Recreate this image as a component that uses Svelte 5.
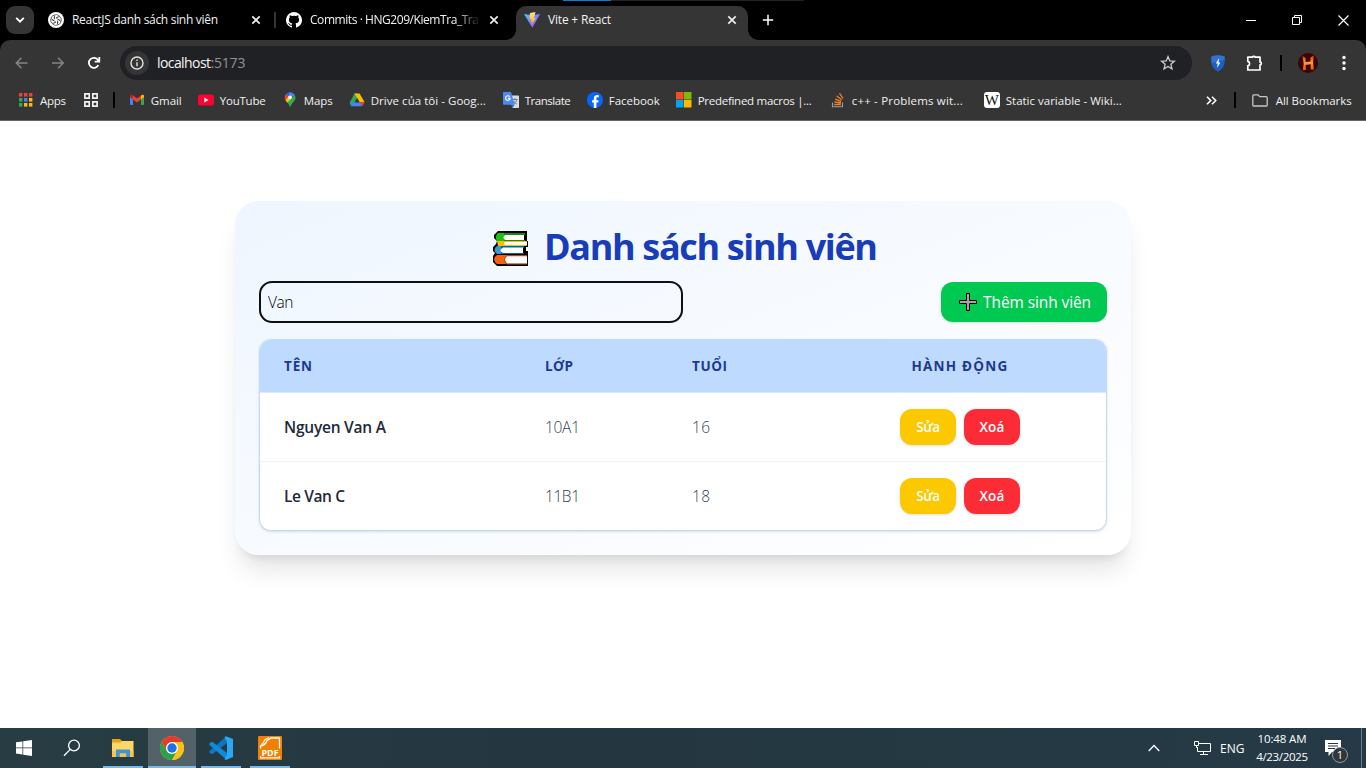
<script>
  // Tracks a label out (or in) so that it fills the given width.
  function fit(node, width) {
    const natural = node.getBoundingClientRect().width;
    const gaps = Math.max(1, [...node.textContent].length - 1);
    node.style.letterSpacing = `${(width - natural) / gaps}px`;
  }

  const bookmarks = [
    { icon: 'gmail', x: 129, text: 'Gmail', w: 31 },
    { icon: 'youtube', x: 198, text: 'YouTube', w: 46 },
    { icon: 'maps', x: 282, text: 'Maps', w: 29 },
    { icon: 'drive', x: 349, text: 'Drive của tôi - Goog...', w: 115 },
    { icon: 'translate', x: 503, text: 'Translate', w: 46 },
    { icon: 'facebook', x: 587, text: 'Facebook', w: 51 },
    { icon: 'microsoft', x: 676, text: 'Predefined macros |...', w: 114 },
    { icon: 'stack', x: 830, text: 'c++ - Problems wit...', w: 111 },
    { icon: 'wiki', x: 984, text: 'Static variable - Wiki...', w: 116 }
  ];

  const query = 'Van';
  const students = [
    { name: 'Nguyen Van A', nameW: 102, group: '10A1', age: 16 },
    { name: 'Le Van C', nameW: 61, group: '11B1', age: 18 }
  ];
</script>

{#snippet cross()}
  <svg class="cross" width="10" height="10" viewBox="0 0 10 10"><path d="M1.3 1.3l7.4 7.4M8.7 1.3L1.3 8.7" stroke="#eee" stroke-width="1.7" /></svg>
{/snippet}

{#snippet mark(name)}
  {#if name === 'gmail'}
    <svg width="16" height="16" viewBox="0 0 16 16"><path fill="#4285f4" d="M1 4.5l3 2.3V13H2a1 1 0 0 1-1-1z" /><path fill="#34a853" d="M15 4.5l-3 2.3V13h2a1 1 0 0 0 1-1z" /><path fill="#fbbc04" d="M12 3.6l.9-.6C13.900 2.300 15 3 15 4v1.200l-3 2.300z" /><path fill="#c5221f" d="M4 3.600L3.100 3C2.100 2.300 1 3 1 4v1.200l3 2.300z" /><path fill="#ea4335" d="M4 3.600l4 3 4-3v3.900l-4 3-4-3z" /></svg>
  {:else if name === 'youtube'}
    <svg width="16" height="16" viewBox="0 0 16 16"><rect y="2.500" width="16" height="11" rx="2.600" fill="#ff0033" /><path fill="#fff" d="M6.300 5.600v4.800L10.600 8z" /></svg>
  {:else if name === 'maps'}
    <svg width="16" height="16" viewBox="0 0 16 16"><path fill="#34a853" d="M8 15.500C7.300 13.500 6.700 12 5.200 10.300L12.800 3.100c1.200 2.100.7 4.300-.6 6C10.100 11.600 8.900 13 8 15.500z" /><path fill="#4285f4" d="M6.400.5C9 -.3 11.700.9 12.800 3.100L8 7z" /><path fill="#1a73e8" d="M6.400.5L8 7 3.800 2.300C4.500 1.400 5.300.8 6.400.5z" /><path fill="#ea4335" d="M3.800 2.200L7 4.900 3.400 8.100C2.200 6 2.600 3.600 3.800 2.200z" /><path fill="#fbbc04" d="M3.300 8L7 4.200l2.500 2.500-4.300 4z" /><circle cx="8" cy="5.300" r="1.900" fill="#fff" /></svg>
  {:else if name === 'drive'}
    <svg width="16" height="16" viewBox="0 0 16 16"><path fill="#34a853" d="M5.400 1.500H8L9.700 4.400 4 14.200H2.600L.8 10.600z" /><path fill="#fbbc04" d="M5.400 1.500h5.200l5 8.800h-5z" /><path fill="#4285f4" d="M4.800 10.200h6.700l1.300 4H2.600L.7 10.900z" /><path fill="#ea4335" d="M10.600 10.200h5l-2.200 4z" /><path fill="#353535" d="M8 6l2.400 4.200H5.600z" /></svg>
  {:else if name === 'translate'}
    <svg width="16" height="16" viewBox="0 0 16 16"><path fill="#d9dce0" d="M6 3.500h9.200a.8.8 0 0 1 .8.800v11a.7.7 0 0 1-.8.700H9.500z" /><path d="M9 7.500h5.500M12 6v1.500M13.800 7.500c-.4 2-1.800 3.600-3.400 4.500M10.300 8.500c.8 1.700 2 2.900 3.600 3.700" stroke="#6f7b85" fill="none" /><path fill="#4a8af4" d="M.8 0H8l3.700 12.700H.8A.8.8 0 0 1 0 12V.8A.8.8 0 0 1 .8 0z" /><path fill="#2866c8" d="M8 12.700h3.700L9.300 16z" /><path d="M6.800 4.700A2.300 2.300 0 1 0 7.200 6.400H4.900" stroke="#fff" stroke-width="1.100" fill="none" /></svg>
  {:else if name === 'facebook'}
    <svg width="16" height="16" viewBox="0 0 16 16"><circle cx="8" cy="8" r="8" fill="#0866ff" /><path fill="#fff" d="M6.800 15.900v-5.300H5V8.200h1.800V6.900c0-2.600 1.200-3.800 3.600-3.800.5 0 1 .1 1.400.2v2.100c-1.800-.2-2.400.1-2.400 1.500v1.300h2.300l-.5 2.400H9.400v5.200c-.8.200-1.700.2-2.600.1z" /></svg>
  {:else if name === 'microsoft'}
    <svg width="16" height="16" viewBox="0 0 16 16"><path fill="#f25022" d="M0 0h7.500v7.500H0z" /><path fill="#7fba00" d="M8 0h7.500v7.500H8z" /><path fill="#00a4ef" d="M0 8h7.500v7.500H0z" /><path fill="#ffb900" d="M8 8h7.500v7.500H8z" /></svg>
  {:else if name === 'stack'}
    <svg width="16" height="16" viewBox="0 0 16 16" fill="none"><path d="M2.500 10.500v4.300h10v-4.300" stroke="#9aa0a6" stroke-width="1.100" /><path d="M4.200 12.500h6.600M4.400 9.900l6.500 1.100M5.200 7.100l6 2.600M6.800 4l5.100 4.100M9.500 1.300l3.600 5.200" stroke="#f48024" stroke-width="1.300" /></svg>
  {:else if name === 'wiki'}
    <span class="wiki">W</span>
  {/if}
{/snippet}

<div class="screen">
  <header class="chrome">
    <div class="top-edge"><i></i></div>
    <div class="tabs">
      <div class="tab-search">
        <svg width="10" height="8" viewBox="0 0 10 8"><path d="M1.200 1.800L5 5.600l3.800-3.800" stroke="#fff" stroke-width="1.900" fill="none" /></svg>
      </div>
      <div class="tab first">
        <svg width="16" height="16" viewBox="0 0 16 16"><circle cx="8" cy="8" r="8" fill="#fff" /><g fill="none" stroke="#333" stroke-width=".7">{#each [0, 60, 120, 180, 240, 300] as turn}<path transform="rotate({turn} 8 8)" d="M6.400 7.200V4.500A2 2 0 0 1 9.600 3l2.200 1.300M8 6.200l2.400-1.400" />{/each}</g></svg>
        <span class="title"><span use:fit={146}>ReactJS danh sách sinh viên</span></span>
        {@render cross()}
      </div>
      <i class="tab-rule"></i>
      <div class="tab second">
        <svg width="16" height="16" viewBox="0 0 16 16"><path fill="#fff" d="M8 0a8 8 0 0 0-2.500 15.600c.4.100.5-.2.500-.4v-1.500c-2.200.5-2.700-.9-2.700-.9-.4-.9-.9-1.200-.9-1.200-.7-.5.1-.5.100-.5.800.1 1.200.8 1.200.8.700 1.200 1.900.9 2.300.7.100-.5.300-.9.500-1.100-1.800-.2-3.600-.9-3.600-3.900 0-.9.300-1.600.8-2.200 0-.2-.3-1 .1-2.100 0 0 .7-.2 2.200.8a7.500 7.500 0 0 1 4 0c1.500-1 2.200-.8 2.200-.8.400 1.100.1 1.900.1 2.100.5.600.8 1.300.8 2.200 0 3.100-1.900 3.700-3.700 3.900.3.300.6.800.6 1.500v2.200c0 .2.100.5.500.4A8 8 0 0 0 8 0z" /></svg>
        <span class="title fade"><span use:fit={169}>Commits · HNG209/KiemTra_Tra</span></span>
        {@render cross()}
      </div>
      <div class="tab active">
        <svg width="16" height="16" viewBox="0 0 16 16"><defs><linearGradient id="va" x2="1" y2="1"><stop stop-color="#41d1ff" /><stop offset="1" stop-color="#bd34fe" /></linearGradient><linearGradient id="vb" x2="0" y2="1"><stop stop-color="#ffea83" /><stop offset="1" stop-color="#ffa800" /></linearGradient></defs><path fill="url(#va)" d="M0 2l8 1.300L16 2 8.400 15.700z" /><path fill="url(#vb)" d="M11.500 0L6 1.100 5.500 7.300l1.900-.3-.6 3 1.500-.5-.7 3.300L11.800 6l-1.900.3z" /></svg>
        <span class="title"><span use:fit={63}>Vite + React</span></span>
        {@render cross()}
      </div>
      <svg class="new-tab" width="12" height="12" viewBox="0 0 12 12"><path d="M6 .8v10.400M.8 6h10.400" stroke="#fff" stroke-width="1.500" /></svg>
      <div class="window-buttons">
        <svg width="11" height="11" viewBox="0 0 11 11"><path d="M0 5.500h10" stroke="#fff" /></svg>
        <svg width="11" height="11" viewBox="0 0 11 11" fill="none" stroke="#fff"><path d="M.5 2.500h7v7h-7zM2.500 2.500v-2h7v7h-2" /></svg>
        <svg width="11" height="11" viewBox="0 0 11 11"><path d="M.5.5l10 10M10.500.5l-10 10" stroke="#fff" stroke-width="1.200" /></svg>
      </div>
    </div>

    <div class="toolbar">
      <svg class="nav" width="14" height="12" viewBox="0 0 14 12" fill="none" stroke="#858585" stroke-width="1.500"><path d="M6.500.8L1.300 6l5.200 5.200M1.300 6H12.500" /></svg>
      <svg class="nav" width="14" height="12" viewBox="0 0 14 12" fill="none" stroke="#858585" stroke-width="1.500"><path d="M7 .8L12.200 6 7 11.200M12.200 6H1" /></svg>
      <svg class="reload" width="14" height="14" viewBox="0 0 14 14" fill="none" stroke="#fff" stroke-width="1.800"><path d="M11.300 9.200A5 5 0 1 1 11.100 4.200L12 5.600M12.300 1v4.700H7.700" /></svg>
      <div class="omnibox">
        <span class="info"><svg width="14" height="14" viewBox="0 0 14 14" fill="none" stroke="#e3e3e3" stroke-width="1.400"><circle cx="7" cy="7" r="6" /><path d="M7 6.200v4M7 3.600v1.500" /></svg></span>
        <span class="host" use:fit={54}>localhost</span><span class="port" use:fit={35}>:5173</span>
        <svg class="star" width="16" height="16" viewBox="0 0 16 16"><path d="M8 1.600l1.800 4.300 4.600.4-3.500 3 1.100 4.600L8 11.400l-4 2.500 1.100-4.600-3.500-3 4.600-.4z" fill="none" stroke="#ccc" stroke-width="1.300" /></svg>
      </div>
      <svg class="shield" width="14" height="17" viewBox="0 0 14 17"><path d="M.3 1.500Q7-.8 13.700 1.500V7c0 4.700-3.700 8-6.700 9.600C4 15 .3 11.700.3 7z" fill="#1f5ec4" /><path d="M.3 1.500Q7-.8 13.700 1.500V5L.3 8z" fill="#4386e5" opacity=".5" /><path d="M8.200 3L4.800 8.600h2L6 13 9.400 7.500H7.500z" fill="#fff" /></svg>
      <svg class="puzzle" width="18" height="18" viewBox="0 0 18 18"><path d="M1.800 3.200H6.500A1.500 1.300 0 0 1 9.300 3.200H14v4.700a1.300 1.500 0 0 1 0 3V16H1.800v-4.200a2.300 2.300 0 0 0 0-4.500z" fill="none" stroke="#fff" stroke-width="1.700" stroke-linejoin="round" /></svg>
      <i class="bar-rule tool-rule"></i>
      <svg class="avatar" width="20" height="20" viewBox="0 0 20 20"><defs><linearGradient id="fire" x2="0" y2="1"><stop stop-color="#d93a0b" /><stop offset=".5" stop-color="#ff9d35" /><stop offset="1" stop-color="#e34a0c" /></linearGradient></defs><circle cx="10" cy="10" r="10" fill="#3a0502" /><path d="M4.500 3L7.600 5v4l4.800-.6V4.500L15.700 2.500l-.6 7.500.8 6.800-3.300-.3.100-5.300-5.200.8.500 5-3.200.3.900-6.500z" fill="url(#fire)" /></svg>
      <svg class="more" width="4" height="16" viewBox="0 0 4 16" fill="#fff"><circle cx="2" cy="2.500" r="1.700" /><circle cx="2" cy="8" r="1.700" /><circle cx="2" cy="13.500" r="1.700" /></svg>
    </div>

    <div class="bookmarks">
      <svg class="apps" width="14" height="14" viewBox="0 0 14 14">{#each ['#ea4335', '#ea4335', '#ea4335', '#34a853', '#4285f4', '#fbbc04', '#34a853', '#fbbc04', '#fbbc04'] as color, i}<rect x={(i % 3) * 5} y={Math.floor(i / 3) * 5} width="3.400" height="3.600" fill={color} />{/each}</svg>
      <span use:fit={26}>Apps</span>
      <svg class="grid" width="14" height="14" viewBox="0 0 14 14" fill="none" stroke="#f1f1f1" stroke-width="1.700"><path d="M.9.9h4.300v4.300H.9zM8.800.9h4.300v4.300H8.800zM.9 8.800h4.300v4.300H.9zM8.800 8.800h4.300v4.300H8.800z" /></svg>
      <i class="bar-rule left-rule"></i>
      <div class="marks" style:grid-template-columns={bookmarks.map((b, i) => `${(bookmarks[i + 1]?.x ?? 1130) - b.x}px`).join(' ')}>
        {#each bookmarks as b}
          <div class="bookmark">{@render mark(b.icon)}<span use:fit={b.w}>{b.text}</span></div>
        {/each}
      </div>
      <svg class="overflow" width="11" height="9" viewBox="0 0 11 9" fill="none" stroke="#fff" stroke-width="1.600"><path d="M1 .8l3.700 3.700L1 8.200M6 .8l3.700 3.700L6 8.200" /></svg>
      <i class="bar-rule right-rule"></i>
      <svg class="folder" width="16" height="13" viewBox="0 0 16 13"><path d="M.8 11V1.800a1 1 0 0 1 1-1H6l1.800 1.900h6.400a1 1 0 0 1 1 1V11a1 1 0 0 1-1 1H1.800a1 1 0 0 1-1-1z" fill="none" stroke="#c7c7c7" stroke-width="1.300" /></svg>
      <span use:fit={76}>All Bookmarks</span>
    </div>
  </header>

  <main class="page">
    <section class="card">
      <h1>
        <svg width="38" height="36" viewBox="0 0 38 36">
          <path fill="#000" d="M6 0h29v10h1v6h-2v4h2v15H5l-4-4v-6l2-3-2-2v-4l3-3 1-3-3-3V4z" />
          <path fill="#16c60c" d="M6 2h8v8H5Q2 6 6 2z" /><path fill="#128b13" d="M12 2h21v2H14q-3 2.500 0 5h19v1H12z" /><path fill="#fff" d="M13 4h19v5H13q-3-2.500 0-5z" />
          <path fill="#ffb900" d="M5 10h30v1H13v3h22v1H6z" /><path fill="#fff" d="M13 11h22v3H13q-2-1.500 0-3z" />
          <path fill="#3a96dd" d="M5 15h6v8H5q-5-4 0-8z" /><path fill="#0063b1" d="M9 15h23v2H11q-4 2 0 5h21v1H9z" /><path fill="#fff" d="M11 16.500h20V22H11q-5-2.500 0-5.500z" />
          <path fill="#f7630c" d="M5 24h30v2H15q-4 3.500 0 7H5q-6-5 0-9z" /><path fill="#c3400b" d="M15 24h20v1.500H15q-4 4 0 7h20V33.500H15q-6-5 0-9.500z" /><path fill="#fff" d="M15 25.200h20v7.300H15q-4-3.700 0-7.300z" />
        </svg>
        <span use:fit={334}>Danh sách sinh viên</span>
      </h1>
      <div class="actions-bar">
        <input value={query} aria-label="Danh sách sinh viên" />
        <button class="add">
          <svg width="18" height="18" viewBox="0 0 18 18"><path d="M7.500.5h3v7h7v3h-7v7h-3v-7h-7v-3h7z" fill="#a5a5b0" stroke="#000" /></svg>
          <span use:fit={108}>Thêm sinh viên</span>
        </button>
      </div>
      <div class="table">
        <div class="row head">
          <div><span use:fit={28}>TÊN</span></div>
          <div><span use:fit={28}>LỚP</span></div>
          <div><span use:fit={35}>TUỔI</span></div>
          <div class="center"><span use:fit={96}>HÀNH ĐỘNG</span></div>
        </div>
        {#each students as s}
          <div class="row">
            <div class="name"><span use:fit={s.nameW}>{s.name}</span></div>
            <div><span use:fit={35}>{s.group}</span></div>
            <div><span use:fit={18}>{s.age}</span></div>
            <div class="center buttons">
              <button class="edit"><span use:fit={24}>Sửa</span></button>
              <button class="delete"><span use:fit={25}>Xoá</span></button>
            </div>
          </div>
        {/each}
      </div>
    </section>
  </main>

  <footer class="taskbar">
    <div class="task"><svg width="16" height="16" viewBox="0 0 16 16" fill="#fff"><path d="M0 2.300L6.500 1.400v6.100H0zM7.200 1.300L16 0v7.500H7.200zM0 8.300h6.500v6.200L0 13.600zM7.200 8.300H16V16l-8.800-1.300z" /></svg></div>
    <div class="task"><svg width="18" height="18" viewBox="0 0 18 18" fill="none" stroke="#fff" stroke-width="1.300"><circle cx="11" cy="6.500" r="5.400" /><path d="M7.200 10.400L1 16.700" /></svg></div>
    <div class="task open files"><svg width="22" height="20" viewBox="0 0 22 20"><path fill="#e5a50a" d="M0 1h8l2 2v4H0z" /><path fill="#ffd766" d="M0 4.500h8.500L10 3h11.500v16H0z" /><path fill="#f7c44b" d="M0 13h21.500v6H0z" /><path fill="#3f94d7" d="M4 19v-7.500h14V19h-3.800v-3.700H7.800V19z" /></svg></div>
    <div class="task open current"><svg width="24" height="24" viewBox="0 0 24 24"><circle cx="12" cy="12" r="12" fill="#fbc116" /><path fill="#e33b2e" d="M1.600 6A12 12 0 0 1 22.400 6H12L6.800 15z" /><path fill="#2ca14b" d="M1.600 6A12 12 0 0 0 12 24l5.200-9L12 17.500 6.800 15z" /><path fill="#fbc116" d="M12 6h10.400A12 12 0 0 1 12 24l5.200-9z" /><circle cx="12" cy="12" r="6" fill="#fff" /><circle cx="12" cy="12" r="4.700" fill="#1a73e8" /></svg></div>
    <div class="task open code"><svg width="24" height="24" viewBox="0 0 24 24"><path fill="#0b77c2" d="M17 .8L18 7 4 17.800 2 18 .4 16.600v-1.500z" /><path fill="#108bd8" d="M.4 7.500L2 6l2 .2L18 17l-1 6.200L.4 9z" /><path fill="#2aa8f2" d="M17 .3L24 3v18l-7 3-1.500-.8L18 18V6l-2.500-5z" /></svg></div>
    <div class="task open pdf"><svg width="24" height="24" viewBox="0 0 24 24"><rect width="24" height="24" rx="1" fill="#f08000" /><path d="M2.500 12.500V10q5-1 6-4.500V5L13 2h8.500v10.500M2.500 20v1.800h19V20" fill="none" stroke="#fff" stroke-width="1.300" /><path d="M3 8.500Q6 7.500 6.500 4L11 1.500" fill="none" stroke="#fff" stroke-width="1.100" /><text x="3.500" y="20" fill="#fff" font-size="8" font-weight="700" textLength="17" lengthAdjust="spacingAndGlyphs">PDF</text></svg></div>
    <div class="tray">
      <svg class="chevron" width="12" height="8" viewBox="0 0 12 8"><path d="M.7 7L6 1.500 11.300 7" stroke="#fff" stroke-width="1.300" fill="none" /></svg>
      <svg class="network" width="17" height="15" viewBox="0 0 17 15" fill="none" stroke="#fff"><path d="M5 2.500h11.500v8H3.500V6M9.500 10.500v3M6 13.500h8M.5.5h4v4h-4zM2.500 4.500v2h1" /></svg>
      <span class="lang" use:fit={23}>ENG</span>
      <div class="clock"><span use:fit={49}>10:48 AM</span><span use:fit={52}>4/23/2025</span></div>
      <div class="notice"><svg width="17" height="17" viewBox="0 0 17 17"><path fill="#fff" d="M0 0h16v12H7l-3.500 4V12H0z" /><path d="M3 3.500h10M3 6h10M3 8.500h7" stroke="#263943" /></svg><b>1</b></div>
      <i class="peek"></i>
    </div>
  </footer>
</div>

<style>
  :global(body) { overflow: hidden; background: #fff; }
  .screen { width: 1366px; height: 768px; display: flex; flex-direction: column; font-family: "Open Sans", "Noto Sans", sans-serif; font-size: 12px; }
  .screen * { box-sizing: border-box; }
  svg { display: block; flex: none; }
  span { white-space: nowrap; }
  i { display: block; flex: none; }

  .chrome { height: 121px; background: #000; color: #f1f1f1; position: relative; flex: none; }
  .top-edge { position: absolute; left: 563px; top: 0; width: 241px; height: 1px; background: #222; }
  .top-edge i { width: 48px; height: 1px; background: #0a7bdc; }
  .tabs { height: 40px; display: flex; align-items: center; padding: 0 12px 0 6px; }
  .tab-search { width: 28px; height: 28px; border-radius: 9px; background: #353535; display: grid; place-items: center; }
  .tab { display: flex; align-items: center; height: 28px; flex: none; }
  .tab .title { margin-left: 8px; flex: 1; line-height: 20px; }
  .title span { display: inline-block; }
  .tab .title.fade { -webkit-mask-image: linear-gradient(90deg, #000 145px, transparent 171px); mask-image: linear-gradient(90deg, #000 145px, transparent 171px); }
  .first { width: 213px; margin-left: 14px; }
  .tab-rule { width: 2px; height: 16px; margin-left: 13px; background: #353535; }
  .second { width: 213px; margin-left: 10px; }
  .tab.second .title { flex: 0 0 172px; margin-right: 7px; }
  .active { width: 232px; height: 34px; align-self: flex-end; margin-left: 17px; padding: 0 11px 6px 8px; border-radius: 10px 10px 0 0; background: #353535; position: relative; }
  .active::before, .active::after { content: ''; position: absolute; bottom: 0; width: 10px; height: 10px; }
  .active::before { left: -10px; background: radial-gradient(circle at 0 0, transparent 9.500px, #353535 10px); }
  .active::after { right: -10px; background: radial-gradient(circle at 100% 0, transparent 9.500px, #353535 10px); }
  .new-tab { margin-left: 14px; }
  .window-buttons { margin-left: auto; display: flex; gap: 35px; padding-right: 5px; }

  .toolbar { height: 46px; background: #353535; border-radius: 10px 10px 0 0; display: flex; align-items: center; padding-left: 15px; }
  .nav + .nav { margin-left: 22px; }
  .reload { margin-left: 22px; }
  .omnibox { width: 1072px; height: 34px; margin-left: 19px; border-radius: 17px; background: #202124; display: flex; align-items: center; padding: 0 16px 0 5px; font-size: 14px; }
  .info { width: 24px; height: 24px; border-radius: 50%; background: #353535; display: grid; place-items: center; margin-right: 8px; }
  .host { color: #f5f5f5; padding-bottom: 1px; }
  .port { color: #929396; padding-bottom: 1px; }
  .star { margin-left: auto; }
  .shield { margin-left: 19px; }
  .puzzle { margin-left: 21px; }
  .bar-rule { width: 2px; height: 16px; background: #000; }
  .tool-rule { margin-left: 16px; }
  .avatar { margin-left: 16px; }
  .more { margin-left: 24px; }

  .bookmarks { height: 35px; background: #353535; border-bottom: 1px solid #666; display: flex; align-items: center; padding: 0 14px 6px 19px; font-size: 11.500px; }
  .apps { margin-right: 7px; }
  .grid { margin-left: 18px; }
  .left-rule { margin-left: 15px; }
  .marks { display: grid; margin-left: 14px; }
  .bookmark { display: flex; align-items: center; gap: 6px; }
  .wiki { width: 16px; height: 16px; border-radius: 3px; background: #fff; color: #111; font: 400 15px/16px "Liberation Serif", serif; display: flex; justify-content: center; }
  .overflow { margin-left: 76px; }
  .right-rule { margin-left: 17px; }
  .folder { margin: 0 8px 0 16px; }

  .page { height: 607px; padding: 80px 235px 0; flex: none; }
  .card { width: 896px; height: 354px; border-radius: 24px; padding: 24px; background: linear-gradient(to bottom right, #eff6ff, #fff); box-shadow: 0 20px 25px -5px rgb(0 0 0 / .1), 0 8px 10px -6px rgb(0 0 0 / .1); }
  h1 { margin: 0; height: 40px; padding-top: 2px; display: flex; align-items: center; gap: 14px; color: #193cb8; font-size: 36px; line-height: 40px; font-weight: 700; padding-left: 233px; }
  h1 svg { position: relative; top: 3px; }
  h1 span { position: relative; top: 1px; }
  .actions-bar { display: flex; justify-content: space-between; margin-top: 16px; align-items: center; height: 42px; }
  input { width: 424px; height: 42px; border: 2px solid #101010; border-radius: 13px; outline: 0; background: transparent; padding: 0 7px; font: 300 15.500px "Open Sans", sans-serif; letter-spacing: -.4px; color: #000; }
  button { border: 0; color: #fff; font-family: inherit; font-weight: 600; display: flex; align-items: center; justify-content: center; padding: 0; box-shadow: 0 1px 3px rgb(0 0 0 / .1), 0 1px 2px -1px rgb(0 0 0 / .1); }
  .add { width: 166px; height: 40px; border-radius: 12px; background: #00c951; font-size: 15.500px; font-weight: 500; gap: 6px; padding-left: 2px; }
  .table { margin-top: 16px; height: 192px; border: 1px solid #bedbff; border-radius: 12px; overflow: hidden; background: #fff; box-shadow: 0 1px 3px rgb(0 0 0 / .1), 0 1px 2px -1px rgb(0 0 0 / .1); }
  .row { display: grid; grid-template-columns: 261px 147px 146px 292px; height: 69px; align-items: center; color: #364153; font-size: 15.500px; font-weight: 300; border-bottom: 1px solid #eff2fb; }
  .row:last-child { border: 0; height: 68px; }
  .row > div { padding: 0 24px; }
  .row .center { display: flex; justify-content: center; }
  .head { height: 53px; background: #bedbff; border-color: #dbeafe; color: #1c398e; font-size: 13.500px; font-weight: 700; }
  .row .name { color: #1e2939; font-weight: 600; }
  .buttons { gap: 8px; }
  .buttons button { width: 56px; height: 36px; border-radius: 12px; font-size: 13.500px; }
  .edit { background: #fcc800; }
  .delete { background: #fb2c36; }

  .taskbar { height: 40px; background: linear-gradient(90deg, #283c44, #243740 40%, #253a46); color: #fff; display: flex; flex: none; }
  .task { width: 48px; height: 40px; display: grid; place-items: center; flex: none; }
  .open { border-bottom: 2px solid #76b9ed; padding-top: 2px; width: 40px; }
  .files { margin-left: 7px; }
  .current { width: 48px; background: #536269; margin-left: 5px; }
  .code { margin-left: 5px; }
  .pdf { margin-left: 9px; }
  .tray { margin-left: auto; display: flex; align-items: center; }
  .chevron { margin-right: 34px; }
  .network { margin-right: 9px; }
  .lang { width: 23px; }
  .clock { width: 54px; margin-left: 12px; display: flex; flex-direction: column; align-items: center; line-height: 18px; font-size: 11.500px; }
  .notice { position: relative; margin-left: 16px; width: 17px; height: 17px; }
  .notice b { position: absolute; left: 7px; top: 7px; width: 16px; height: 16px; border: 1px solid #949b9e; border-radius: 50%; background: #30363a; font-size: 11px; line-height: 14px; text-align: center; font-weight: 400; }
  .peek { width: 1px; height: 40px; background: #6d7b83; margin: 0 4px 0 19px; }
</style>
